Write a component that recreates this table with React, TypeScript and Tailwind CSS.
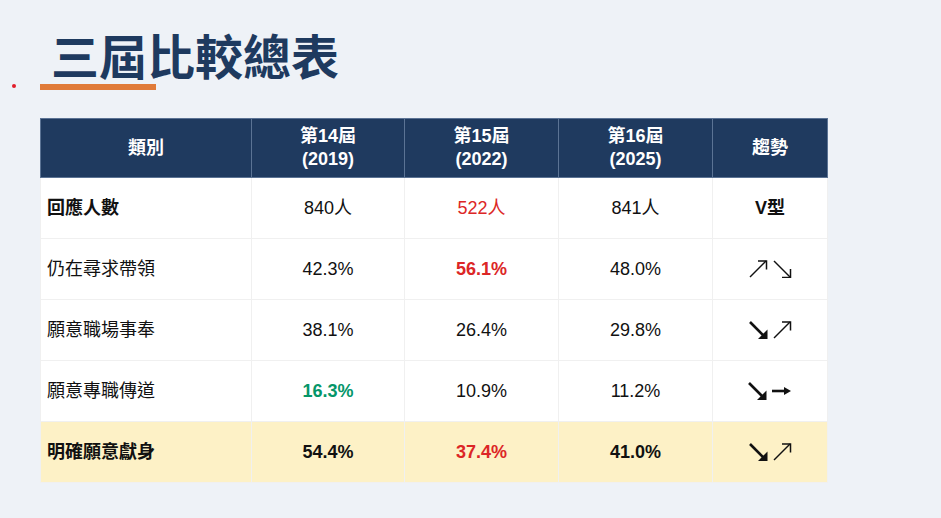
import * as React from "react";

type Dir = "ne" | "se" | "e";

// Small trend arrow glyphs, drawn to match the slide
function Arrow({ dir, heavy = false }: { dir: Dir; heavy?: boolean }) {
  const w = heavy ? 2.6 : 1.5;
  if (dir === "e") {
    return (
      <svg width="20" height="18" viewBox="0 0 20 18" className="block">
        <line x1="0" y1="9" x2="14" y2="9" stroke="#111" strokeWidth={w} />
        <polygon points="19,9 12,5 12,13" fill="#111" />
      </svg>
    );
  }
  if (dir === "ne") {
    return (
      <svg width="19" height="18" viewBox="0 0 19 18" className="block">
        <line x1="1" y1="17" x2="17" y2="1" stroke="#111" strokeWidth={w} />
        {heavy ? (
          <polygon points="18,0 18,9 9,0" fill="#111" />
        ) : (
          <polyline points="9,1 17.5,1 17.5,9.5" fill="none" stroke="#111" strokeWidth={w} />
        )}
      </svg>
    );
  }
  return (
    <svg width="19" height="18" viewBox="0 0 19 18" className="block">
      <line x1="1" y1="1" x2={heavy ? 15 : 17} y2={heavy ? 15 : 17} stroke="#111" strokeWidth={w} />
      {heavy ? (
        <polygon points="18.5,18 9,18 18.5,8.5" fill="#111" />
      ) : (
        <polyline points="9,17.5 17.5,17.5 17.5,9" fill="none" stroke="#111" strokeWidth={w} />
      )}
    </svg>
  );
}

type Row = {
  label: string;
  vals: { text: string; color?: string; bold?: boolean }[];
  trend: React.ReactNode;
  highlight?: boolean;
};

const rows: Row[] = [
  {
    label: "回應人數",
    vals: [{ text: "840人" }, { text: "522人", color: "text-[#dc2626]" }, { text: "841人" }],
    trend: <span className="font-bold">V型</span>,
  },
  {
    label: "仍在尋求帶領",
    vals: [{ text: "42.3%" }, { text: "56.1%", color: "text-[#dc2626]", bold: true }, { text: "48.0%" }],
    trend: (
      <>
        <Arrow dir="ne" />
        <Arrow dir="se" />
      </>
    ),
  },
  {
    label: "願意職場事奉",
    vals: [{ text: "38.1%" }, { text: "26.4%" }, { text: "29.8%" }],
    trend: (
      <>
        <Arrow dir="se" heavy />
        <Arrow dir="ne" />
      </>
    ),
  },
  {
    label: "願意專職傳道",
    vals: [{ text: "16.3%", color: "text-[#059669]", bold: true }, { text: "10.9%" }, { text: "11.2%" }],
    trend: (
      <>
        <Arrow dir="se" heavy />
        <Arrow dir="e" heavy />
      </>
    ),
  },
  {
    label: "明確願意獻身",
    vals: [
      { text: "54.4%", bold: true },
      { text: "37.4%", color: "text-[#dc2626]", bold: true },
      { text: "41.0%", bold: true },
    ],
    trend: (
      <>
        <Arrow dir="se" heavy />
        <Arrow dir="ne" />
      </>
    ),
    highlight: true,
  },
];

const font = "font-['Liberation_Sans','Noto_Sans_CJK_TC',sans-serif]";

export default function App() {
  return (
    <div className={`relative w-[941px] h-[518px] overflow-hidden bg-[#eef2f7] ${font}`}>
      {/* stray red dot */}
      <div className="absolute left-[12px] top-[84px] w-[4px] h-[4px] rounded-full bg-[#e11d2a]" />

      <div className="flex flex-col pl-[40px] pt-[28px]">
        <h1 className="ml-[11px] text-[48px] leading-[52px] font-bold text-[#1e3a5f] font-['Noto_Sans_CJK_TC',sans-serif]">
          三屆比較總表
        </h1>
        <div className="mt-[4px] w-[116px] h-[6px] bg-[#e07b39]" />

        <table className="mt-[28px] w-[787px] border-collapse table-fixed text-[18px] text-[#111]">
          <colgroup>
            <col className="w-[211px]" />
            <col className="w-[153px]" />
            <col className="w-[154px]" />
            <col className="w-[154px]" />
            <col className="w-[115px]" />
          </colgroup>
          <thead>
            <tr className="h-[59px] bg-[#1f3a5f] text-white font-bold leading-[23px]">
              <th className="border border-[#5b7394] text-center font-bold">類別</th>
              <th className="border border-[#5b7394] text-center font-bold">
                第14屆
                <br />
                (2019)
              </th>
              <th className="border border-[#5b7394] text-center font-bold">
                第15屆
                <br />
                (2022)
              </th>
              <th className="border border-[#5b7394] text-center font-bold">
                第16屆
                <br />
                (2025)
              </th>
              <th className="border border-[#5b7394] text-center font-bold">趨勢</th>
            </tr>
          </thead>
          <tbody>
            {rows.map((r) => (
              <tr
                key={r.label}
                className={`h-[61px] ${r.highlight ? "bg-[#fdf1c6]" : "bg-white"}`}
              >
                <td className={`border border-[#f0f0f0] pl-[6px] text-left ${r.highlight || r.label === "回應人數" ? "font-bold" : ""}`}>
                  {r.label}
                </td>
                {r.vals.map((v, i) => (
                  <td
                    key={i}
                    className={`border border-[#f0f0f0] text-center ${v.color ?? ""} ${v.bold ? "font-bold" : ""}`}
                  >
                    {v.text}
                  </td>
                ))}
                <td className="border border-[#f0f0f0]">
                  <div className="flex items-center justify-center gap-[5px]">{r.trend}</div>
                </td>
              </tr>
            ))}
          </tbody>
        </table>
      </div>
    </div>
  );
}
